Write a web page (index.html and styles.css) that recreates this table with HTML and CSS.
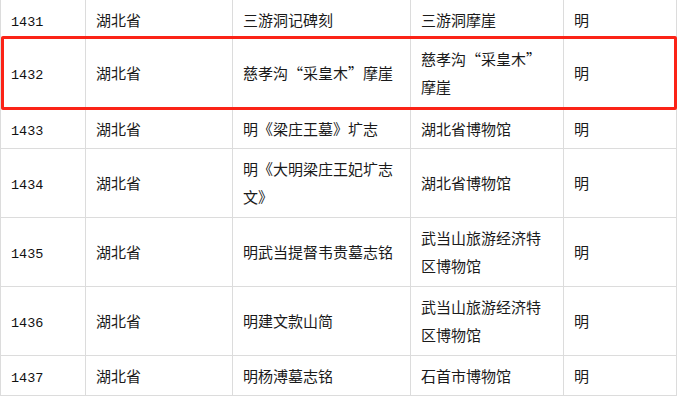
FILE: index.html
```html
<!DOCTYPE html>
<html lang="zh-CN">
<head>
<meta charset="utf-8">
<title>湖北省 石刻</title>
<link rel="stylesheet" href="styles.css">
</head>
<body>
<div class="wrap">
  <table class="list">
    <tbody>
      <tr class="r1">
        <td class="c1 num">1431</td><td class="c2">湖北省</td><td class="c3">三游洞记碑刻</td><td class="c4">三游洞摩崖</td><td class="c5">明</td>
      </tr>
      <tr class="r2">
        <td class="num">1432</td><td>湖北省</td><td>慈孝沟“采皇木”摩崖</td><td>慈孝沟“采皇木”摩崖</td><td>明</td>
      </tr>
      <tr class="r3">
        <td class="num">1433</td><td>湖北省</td><td>明《梁庄王墓》圹志</td><td>湖北省博物馆</td><td>明</td>
      </tr>
      <tr class="r4">
        <td class="num">1434</td><td>湖北省</td><td>明《大明梁庄王妃圹志文》</td><td>湖北省博物馆</td><td>明</td>
      </tr>
      <tr class="r4">
        <td class="num">1435</td><td>湖北省</td><td>明武当提督韦贵墓志铭</td><td>武当山旅游经济特区博物馆</td><td>明</td>
      </tr>
      <tr class="r4">
        <td class="num">1436</td><td>湖北省</td><td>明建文款山简</td><td>武当山旅游经济特区博物馆</td><td>明</td>
      </tr>
      <tr class="r3">
        <td class="num">1437</td><td>湖北省</td><td>明杨溥墓志铭</td><td>石首市博物馆</td><td>明</td>
      </tr>
    </tbody>
  </table>
  <div class="highlight"></div>
</div>
</body>
</html>
```
FILE: styles.css
```css
html, body {
  margin: 0;
  padding: 0;
  background: #ffffff;
}
body {
  font-family: "Noto Sans CJK SC", "Noto Sans", sans-serif;
  font-size: 15px;
  color: #1a1a1a;
  overflow: hidden;
}
.wrap {
  position: relative;
  width: 677px;
}
.list {
  border-collapse: separate;
  border-spacing: 0;
  table-layout: fixed;
  width: 677px;
}
.list td {
  box-sizing: border-box;
  border-right: 1px solid #dcdcdc;
  border-bottom: 1px solid #dcdcdc;
  padding: 6px 10px 5px 10px;
  line-height: 28px;
  vertical-align: middle;
  text-align: left;
  word-break: normal;
}
.list td:first-child {
  border-left: 1px solid #dcdcdc;
}
.c1 { width: 86px; }
.c2 { width: 147px; }
.c3 { width: 178px; }
.c4 { width: 153px; }
.c5 { width: 113px; }
.num {
  font-family: "Liberation Mono", "DejaVu Sans Mono", monospace;
  font-size: 13.5px;
  color: #111111;
}
.r1 td { padding-top: 6px; padding-bottom: 3px; }
.r2 td { padding-top: 7px; padding-bottom: 7px; }
.r3 td { padding-top: 6px; padding-bottom: 5px; }
.r4 td { padding-top: 6px; padding-bottom: 6px; }
.r1 td.num { padding-top: 9px; padding-bottom: 0; }
.r2 td.num { padding-top: 10px; padding-bottom: 4px; }
.r3 td.num { padding-top: 9px; padding-bottom: 2px; }
.r4 td.num { padding-top: 9px; padding-bottom: 3px; }
.highlight {
  position: absolute;
  left: 1px;
  top: 36px;
  width: 676px;
  height: 74px;
  box-sizing: border-box;
  border: 3px solid #fb2317;
  border-radius: 2px;
  pointer-events: none;
}
```
